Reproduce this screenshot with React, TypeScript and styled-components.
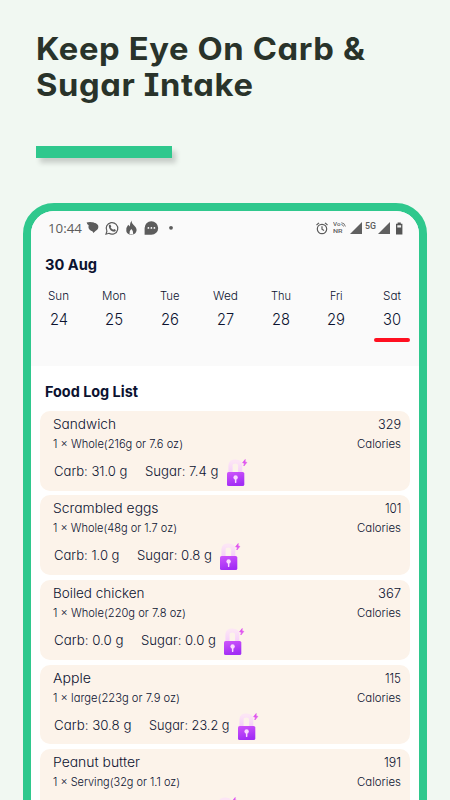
import React, { useLayoutEffect, useRef, useState } from "react";
import styled, { createGlobalStyle } from "styled-components";

const GlobalStyle = createGlobalStyle`
  *, *::before, *::after { box-sizing: border-box; }
  body { margin: 0; background: #f1f8f2; overflow: hidden; }
`;

const ink = "#0b1230";
const green = "#2fc88d";

const Screen = styled.main`
  width: 450px;
  height: 800px;
  overflow: hidden;
  display: flex;
  flex-direction: column;
  background: #f1f8f2;
  color: ${ink};
  font-family: Inter, "Open Sans", sans-serif;
  font-feature-settings: "cv11";
  font-weight: 350;
`;

const Hero = styled.header`
  flex: none;
  height: 203px;
  padding: 31px 0 0 36px;
`;

const Headline = styled.h1`
  margin: 0;
  display: flex;
  flex-direction: column;
  color: #29332a;
  font-size: 31px;
  font-weight: 700;
  line-height: 36px;
  letter-spacing: 0.6px;
  font-feature-settings: "cv11", "cv08";
`;

const Accent = styled.div`
  width: 135.5px;
  height: 11.5px;
  margin-top: 43.3px;
  background: ${green};
  box-shadow: 4px 5px 5px rgba(60, 60, 60, 0.22);
`;

const Phone = styled.section`
  flex: none;
  width: 404px;
  height: 640px;
  margin-left: 23px;
  border: 8px solid ${green};
  border-radius: 31px;
  background: #fff;
  overflow: hidden;
`;

const TopPanel = styled.div`
  height: 155px;
  background: #fafafa;
`;

const StatusBar = styled.div`
  height: 34px;
  padding: 0 16px 0 17px;
  display: flex;
  align-items: center;
  color: #5c5c5c;
`;

const Clock = styled.div`
  font-family: "Open Sans", sans-serif;
  font-weight: 380;
  font-size: 13px;
  line-height: 18px;
  width: 38px;
`;

const StatusIcons = styled.svg`
  display: block;
`;

const Push = styled.div`
  flex: 1;
`;

const NetLabel = styled.div`
  font: 500 5.6px/7px Roboto, sans-serif;
  width: 13px;
  margin: 0 4px 0 5px;
`;

const NetRow = styled.div`
  display: flex;
  height: 7px;
`;

const FiveG = styled.div`
  font: 500 9px/10px Roboto, sans-serif;
  margin: 0 2px 5px 3px;
  width: 11px;
`;

const Heading = styled.h2<{ $top: number }>`
  margin: 0;
  padding: ${(p) => p.$top}px 0 0 14px;
  font-size: 14.8px;
  font-weight: 700;
  line-height: 20px;
`;

const Week = styled.div`
  display: grid;
  grid-template-columns: repeat(7, 55.5px);
  padding-top: 11px;
`;

const Day = styled.div`
  display: flex;
  flex-direction: column;
  align-items: center;
  font-size: 11px;
  line-height: 20px;
`;

const DayNumber = styled.div`
  font-size: 15.4px;
  line-height: 24px;
  margin-top: 2px;
`;

const Marker = styled.div`
  width: 36px;
  height: 4.6px;
  margin: 5.5px 0 0 1px;
  border-radius: 2px;
  background: #ff1020;
`;

const FoodList = styled.div`
  display: flex;
  flex-direction: column;
  gap: 4.7px;
  padding: 8.8px 9px 0;
`;

const Card = styled.article`
  height: 79.9px;
  flex: none;
  border-radius: 10px;
  padding: 3px 9px 0 13px;
  background: #fcf3ea;
`;

const Row = styled.div<{ $size: number; $height: number }>`
  display: flex;
  justify-content: space-between;
  font-size: ${(p) => p.$size}px;
  line-height: ${(p) => p.$height}px;
  height: ${(p) => p.$height}px;
`;

const Nutrients = styled.div`
  display: flex;
  align-items: flex-start;
  gap: 18px;
  padding: 3px 0 0 0.5px;
  font-size: 13px;
  line-height: 31px;
`;

const LockDrawing = styled.svg`
  display: block;
  margin: 3px 0 0 -10px;
  overflow: visible;
`;

const TextBox = styled.span<{ $width: number }>`
  display: block;
  flex: none;
  white-space: nowrap;
  width: ${(p) => p.$width}px;
`;

const Glyphs = styled.span`
  display: inline-block;
  vertical-align: top;
  transform-origin: 0 50%;
`;

/** Stretches a single line of text so that it fills the given width. */
function Line({ text, width }: { text: string; width: number }) {
  const ref = useRef<HTMLSpanElement>(null);
  const [scale, setScale] = useState(1);
  useLayoutEffect(() => {
    const range = document.createRange();
    const node = ref.current;
    if (!node || !text) return;
    node.style.transform = "none";
    range.selectNodeContents(node);
    const next = width / range.getBoundingClientRect().width;
    node.style.transform = `scaleX(${next})`;
    setScale(next);
  }, [text, width]);
  return (
    <TextBox $width={width}>
      <Glyphs ref={ref} style={{ transform: `scaleX(${scale})` }}>
        {text}
      </Glyphs>
    </TextBox>
  );
}

function Lock() {
  return (
    <LockDrawing width="22" height="28" viewBox="0 0 22 28">
      <defs>
        <linearGradient id="body" x1="0" y1="0" x2="0.3" y2="1">
          <stop offset="0" stopColor="#cf55fb" />
          <stop offset="1" stopColor="#a22df5" />
        </linearGradient>
        <linearGradient id="shackle" x1="0" y1="0" x2="0" y2="1">
          <stop offset="0" stopColor="#fce5f5" />
          <stop offset="1" stopColor="#f5cefb" />
        </linearGradient>
      </defs>
      <path d="M3.5 14V6.5Q3.5 2.5 8.5 2.5Q13.2 2.5 13.2 6.5V14" fill="none" stroke="url(#shackle)" strokeWidth="4.2" />
      <rect x="0" y="13" width="17.3" height="14" rx="1.6" fill="url(#body)" />
      <circle cx="8.6" cy="18.4" r="2.2" fill="#fbd9ff" />
      <path d="M7.9 18h1.5v5.5q-.75 1-1.5 0z" fill="#fbd9ff" />
      <path d="M18.2 .5 15.6 3.8 17.5 4.2 16.8 7 19.8 3.4 18 3z" fill="#df55ef" stroke="#df55ef" strokeWidth=".7" />
    </LockDrawing>
  );
}

const days: [string, number, string, number][] = [
  ["Sun", 21, "24", 18],
  ["Mon", 24, "25", 18],
  ["Tue", 19.5, "26", 18],
  ["Wed", 25, "27", 17],
  ["Thu", 20, "28", 18],
  ["Fri", 12.5, "29", 18],
  ["Sat", 18, "30", 18],
];

type Text = [string, number];
interface Food {
  name: Text;
  serving: Text;
  calories: Text;
  carb: Text;
  sugar: Text;
}

const foods: Food[] = [
  { name: ["Sandwich", 63], serving: ["1 × Whole(216g or 7.6 oz)", 130], calories: ["329", 23], carb: ["Carb: 31.0 g", 73.5], sugar: ["Sugar: 7.4 g", 73.5] },
  { name: ["Scrambled eggs", 105.5], serving: ["1 × Whole(48g or 1.7 oz)", 124], calories: ["101", 16.5], carb: ["Carb: 1.0 g", 65.5], sugar: ["Sugar: 0.8 g", 75] },
  { name: ["Boiled chicken", 91.5], serving: ["1 × Whole(220g or 7.8 oz)", 133], calories: ["367", 23], carb: ["Carb: 0.0 g", 69.5], sugar: ["Sugar: 0.0 g", 75] },
  { name: ["Apple", 38], serving: ["1 × large(223g or 7.9 oz)", 127], calories: ["115", 16], carb: ["Carb: 30.8 g", 77.5], sugar: ["Sugar: 23.2 g", 80.5] },
  { name: ["Peanut butter", 87], serving: ["1 × Serving(32g or 1.1 oz)", 127], calories: ["191", 17], carb: ["", 65], sugar: ["", 72] },
];

export default function App() {
  return (
    <Screen>
      <GlobalStyle />
      <Hero>
        <Headline>
          <Line text="Keep Eye On Carb &" width={329.5} />
          <Line text="Sugar Intake" width={217.5} />
        </Headline>
        <Accent />
      </Hero>
      <Phone>
        <TopPanel>
          <StatusBar>
            <Clock>
              <Line text="10:44" width={34} />
            </Clock>
            <StatusIcons width="90" height="16" viewBox="0 0 90 16" fill="#5c5c5c">
              <ellipse cx="7.4" cy="7" rx="5" ry="4.2" />
              <path d="M.6 2.6Q3 1.6 8 2.4L6 4.4 3 5.6Q1 4.6 .6 2.6ZM6 10.6H10L7.4 13Z" />
              <path d="M20 14.2 20.9 11.2A5.8 5.8 0 1 1 22.9 13.3Z" fill="none" stroke="#5c5c5c" strokeWidth="1.2" />
              <path d="M22.9 5.2Q24 3.8 24.7 5.2L25.3 6.5 24.7 7.5Q25.5 9 27.3 9.7L28.2 9 29.9 10Q29.8 11.7 28.1 11.7Q23.7 11 22.9 7Z" />
              <path fillRule="evenodd" d="M45.6 .4Q45.3 3 48.6 5.9Q51.6 8.8 50.1 12Q48.8 14.8 45.3 14.8Q41.2 14.6 40.3 11.2Q39.7 7.8 42.2 4.8L43.7 6.6Q43.9 2.6 45.6 .4ZM45.3 9Q42.8 11.2 43.5 13.9Q45.4 14.7 47.2 13.9Q47.8 11.2 45.3 9Z" />
              <path d="M58.6 14.8V8.1A6.8 6.8 0 1 1 65.4 14.8Z" />
              <circle cx="62.4" cy="7.9" r=".9" fill="#fff" />
              <circle cx="65.4" cy="7.9" r=".9" fill="#fff" />
              <circle cx="68.4" cy="7.9" r=".9" fill="#fff" />
              <circle cx="85" cy="7.8" r="1.9" />
            </StatusIcons>
            <Push />
            <StatusIcons width="12" height="13" viewBox="0 0 12 13" fill="none" stroke="#5c5c5c" strokeWidth="1.2">
              <circle cx="6" cy="7" r="4.7" />
              <path d="M6 4.3V7.2L8 8.5M.5 3 3 .9M11.5 3 9 .9" />
            </StatusIcons>
            <NetLabel>
              <NetRow>
                <Line text="Vo" width={7.5} />
                <StatusIcons width="5" height="7" viewBox="0 0 5 7" fill="none" stroke="#5c5c5c" strokeWidth=".8">
                  <path d="M.3 1.7Q3.8 2 4.4 5.5M.3 3.5Q2.2 3.8 2.5 5.5" />
                </StatusIcons>
              </NetRow>
              <Line text="NR" width={9.5} />
            </NetLabel>
            <StatusIcons width="12" height="12" viewBox="0 0 12 12">
              <path d="M12 0V12H0Z" fill="#606060" />
            </StatusIcons>
            <FiveG>
              <Line text="5G" width={11} />
            </FiveG>
            <StatusIcons width="12" height="12" viewBox="0 0 12 12">
              <path d="M12 0V12H0Z" fill="#606060" />
            </StatusIcons>
            <StatusIcons width="13" height="13" viewBox="0 0 13 13">
              <path d="M6 1.8H7.6V.4H10.8V1.8H12.4V12.5H6Z" fill="#555" />
              <path d="M7.3 3.2H11.1V5.6H7.3Z" fill="#eee" />
            </StatusIcons>
          </StatusBar>
          <Heading $top={10}>
            <Line text="30 Aug" width={52} />
          </Heading>
          <Week>
            {days.map(([name, nameWidth, date, dateWidth]) => (
              <Day key={name}>
                <Line text={name} width={nameWidth} />
                <DayNumber>
                  <Line text={date} width={dateWidth} />
                </DayNumber>
                {date === "30" && <Marker />}
              </Day>
            ))}
          </Week>
        </TopPanel>
        <Heading $top={16}>
          <Line text="Food Log List" width={93} />
        </Heading>
        <FoodList>
          {foods.map((food) => (
            <Card key={food.name[0]}>
              <Row $size={13.3} $height={21}>
                <Line text={food.name[0]} width={food.name[1]} />
                <Line text={food.calories[0]} width={food.calories[1]} />
              </Row>
              <Row $size={11} $height={18}>
                <Line text={food.serving[0]} width={food.serving[1]} />
                <Line text="Calories" width={44} />
              </Row>
              <Nutrients>
                <Line text={food.carb[0]} width={food.carb[1]} />
                <Line text={food.sugar[0]} width={food.sugar[1]} />
                <Lock />
              </Nutrients>
            </Card>
          ))}
        </FoodList>
      </Phone>
    </Screen>
  );
}
